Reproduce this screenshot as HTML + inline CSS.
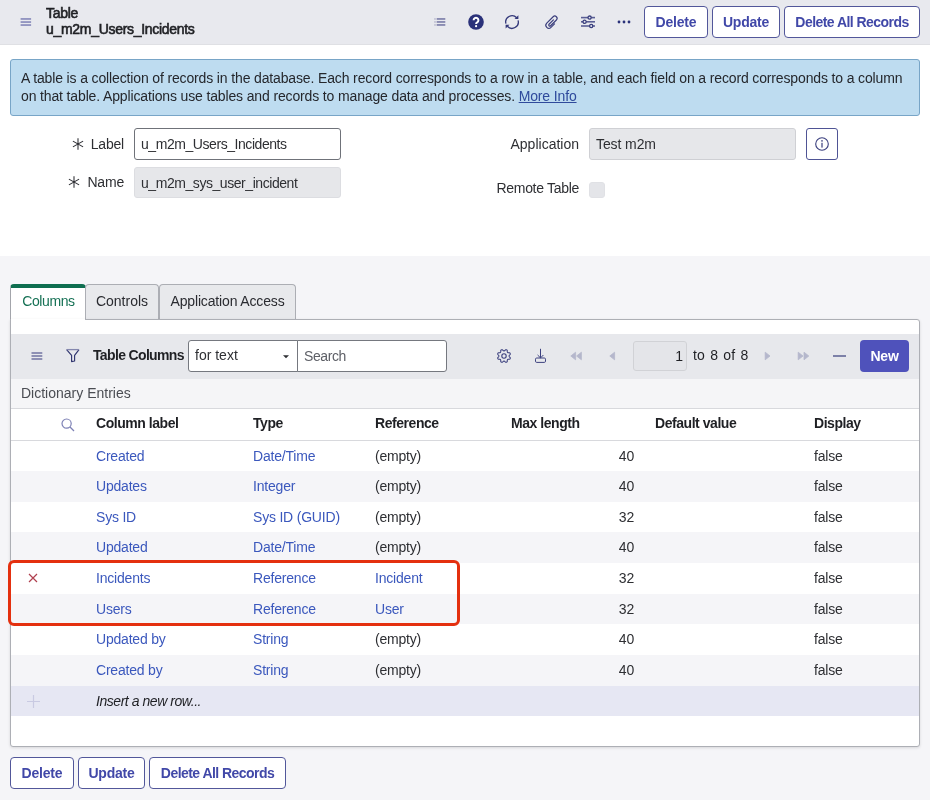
<!DOCTYPE html>
<html><head><meta charset="utf-8">
<style>
*{box-sizing:border-box;margin:0;padding:0}
html,body{width:930px;height:800px;overflow:hidden}body>*{will-change:transform}
body{font-family:"Liberation Sans",sans-serif;font-size:14px;color:#2e2f33;background:#f5f5f8;position:relative}
.a{position:absolute;white-space:nowrap}
#hdr{left:0;top:0;width:930px;height:45px;background:#e8e9ee;border-bottom:1px solid #dfe0e4}
.btn{position:absolute;height:32px;border:1px solid #52579a;border-radius:4px;background:#fff;color:#4148a8;font-weight:bold;font-size:14px;text-align:center;line-height:30px;letter-spacing:-0.2px}
#white{left:0;top:45px;width:930px;height:211px;background:#fff}
#info{left:10px;top:59px;width:910px;height:57px;background:#bedcf0;border:1px solid #78a5c7;border-radius:3px;padding:9px 0 0 10px;line-height:18px;font-size:14px;letter-spacing:-0.14px;color:#25272c;white-space:normal}
#info a{color:#2f4a9c;text-decoration:underline}
.lbl{position:absolute;font-size:14px;color:#2e2f33;text-align:right}
.inp{position:absolute;height:32px;border-radius:3px;font-size:14px;line-height:30px;padding-left:6px;letter-spacing:-0.44px}
.tab{position:absolute;top:284px;height:36px;font-size:14px;line-height:32px;text-align:center;border:1px solid #acaeb4;border-bottom:none;border-radius:4px 4px 0 0;background:#e8e9ec;color:#2a2b30}
#panel{left:10px;top:319px;width:910px;height:428px;background:#fff;border:1px solid #adafb5;border-radius:0 3px 3px 3px;box-shadow:0 1px 3px rgba(0,0,0,0.12)}
#tb{left:11px;top:334px;width:908px;height:45px;background:#e7e8ec}
#dict{left:11px;top:379px;width:908px;height:30px;background:#f5f5f7;border-bottom:1px solid #d8d9dd}
.row{position:absolute;left:11px;width:908px;height:31px}
.g{background:#f5f5f8}
.c{position:absolute;font-size:14px;line-height:31px;letter-spacing:-0.2px}
.lk{color:#3b58bd}
.th{font-weight:bold;color:#1f2024;letter-spacing:-0.45px}
</style></head><body>
<!-- header -->
<div id="hdr" class="a"></div>
<svg class="a" style="left:20px;top:17px" width="12" height="10" viewBox="0 0 12 10"><g fill="#8a8dbc"><rect x="0.6" y="1.1" width="10.5" height="1.7"/><rect x="0.6" y="4.2" width="10.5" height="1.7"/><rect x="0.6" y="7.2" width="10.5" height="1.7"/></g></svg>
<div class="a" style="left:46px;top:5px;font-size:14px;line-height:16px;color:#1f2024;letter-spacing:-0.3px;-webkit-text-stroke:0.6px #1f2024">Table<br>u_m2m_Users_Incidents</div>

<!-- header icons -->
<svg class="a" style="left:434px;top:17px" width="12" height="10" viewBox="0 0 12 10"><g fill="#8a8cb2"><rect x="3" y="1" width="8.3" height="1.9"/><rect x="3" y="4" width="8.3" height="1.9"/><rect x="3" y="7" width="8.3" height="1.9"/></g><g fill="#c9cad9"><rect x="0" y="1" width="3" height="1.9"/><rect x="0" y="4" width="3" height="1.9"/><rect x="0" y="7" width="3" height="1.9"/></g></svg>
<svg class="a" style="left:468px;top:14px" width="16" height="16" viewBox="0 0 16 16"><circle cx="8" cy="8" r="7.8" fill="#2b327a"/><path d="M5.6 6.2a2.4 2.4 0 1 1 3.6 2.1c-.8.45-1.1.8-1.1 1.6" fill="none" stroke="#fff" stroke-width="2"/><circle cx="8.1" cy="12.2" r="1.1" fill="#fff"/></svg>
<svg class="a" style="left:504px;top:14px" width="16" height="16" viewBox="0 0 16 16"><g fill="none" stroke="#33387a" stroke-width="1.3"><path d="M1.92 9.63A6.3 6.3 0 0 1 12.68 3.78"/><path d="M14.09 6.37A6.3 6.3 0 0 1 3.32 12.22"/></g><path d="M14.4 1.2v3.9h-3.9z" fill="#33387a"/><path d="M1.6 14.6v-3.9h3.9z" fill="#33387a"/></svg>
<svg class="a" style="left:542px;top:12px" width="20" height="20" viewBox="0 0 20 20"><g transform="translate(10 10.1) rotate(-45)"><path d="M0.6 3L-4.4 3A3 3 0 0 1 -4.4 -3L4.6 -3A2.3 2.3 0 0 1 4.6 1.6L-3.6 1.6A1.1 1.1 0 0 1 -3.6 -0.6L2.6 -0.6" fill="none" stroke="#3a3e7c" stroke-width="1.15" stroke-linecap="round"/></g></svg>
<svg class="a" style="left:581px;top:15px" width="15" height="14" viewBox="0 0 15 14"><g stroke="#5a5f95" stroke-width="1.6"><line x1="0" y1="2.6" x2="14" y2="2.6"/><line x1="0" y1="6.8" x2="14" y2="6.8"/><line x1="0" y1="11" x2="14" y2="11"/></g><g fill="#e8e9ee" stroke="#3a3f7e" stroke-width="1.3"><circle cx="8.6" cy="2.6" r="1.6"/><circle cx="3.6" cy="6.8" r="1.6"/><circle cx="10.2" cy="11" r="1.6"/></g></svg>
<svg class="a" style="left:617px;top:20px" width="14" height="4" viewBox="0 0 14 4"><g fill="#2b327a"><circle cx="2" cy="2" r="1.4"/><circle cx="7" cy="2" r="1.4"/><circle cx="12" cy="2" r="1.4"/></g></svg>

<div class="btn" style="left:644px;top:6px;width:64px">Delete</div>
<div class="btn" style="left:712px;top:6px;width:68px">Update</div>
<div class="btn" style="left:784px;top:6px;width:136px;letter-spacing:-0.55px">Delete All Records</div>

<!-- white form -->
<div id="white" class="a"></div>
<div id="info" class="a">A table is a collection of records in the database. Each record corresponds to a row in a table, and each field on a record corresponds to a column on that table. Applications use tables and records to manage data and processes. <a>More Info</a></div>

<svg class="a" style="left:71px;top:137px" width="14" height="14" viewBox="0 0 14 14"><g stroke="#2a2b30" stroke-width="1.05"><path d="M7 1.2v11.6M1.9 4.1l10.2 5.8M1.9 9.9l10.2-5.8"/></g></svg><div class="lbl" style="left:60px;top:136px;width:64px;letter-spacing:-0.2px">Label</div>
<div class="inp" style="left:134px;top:128px;width:207px;border:1px solid #6f7279;background:#fff">u_m2m_Users_Incidents</div>
<svg class="a" style="left:67px;top:175px" width="14" height="14" viewBox="0 0 14 14"><g stroke="#2a2b30" stroke-width="1.05"><path d="M7 1.2v11.6M1.9 4.1l10.2 5.8M1.9 9.9l10.2-5.8"/></g></svg><div class="lbl" style="left:60px;top:174px;width:64px;letter-spacing:-0.2px">Name</div>
<div class="inp" style="left:134px;top:167px;width:207px;height:31px;border:1px solid #dcdde1;background:#e6e7ea">u_m2m_sys_user_incident</div>

<div class="lbl" style="left:480px;top:136px;width:99px">Application</div>
<div class="inp" style="left:589px;top:128px;width:207px;border:1px solid #cfd0d4;background:#e6e7ea;letter-spacing:-0.1px">Test m2m</div>
<div class="a" style="left:806px;top:128px;width:32px;height:32px;border:1px solid #4f5495;border-radius:3px;background:#fff"></div>
<svg class="a" style="left:815px;top:137px" width="14" height="14" viewBox="0 0 14 14"><circle cx="7" cy="7" r="6.3" fill="none" stroke="#3a3f7e" stroke-width="1.1"/><rect x="6.4" y="5.8" width="1.2" height="4.8" fill="#3a3f7e"/><circle cx="7" cy="3.9" r=".8" fill="#3a3f7e"/></svg>
<div class="lbl" style="left:480px;top:180px;width:99px;letter-spacing:-0.3px">Remote Table</div>
<div class="a" style="left:589px;top:182px;width:16px;height:16px;background:#e4e5e9;border:1px solid #e0e1e5;border-radius:3px"></div>

<!-- tabs -->
<div class="tab" style="left:10px;width:76px;background:#fff;color:#167155;border-top:4px solid #0f6e50;border-left:1px solid #a3a5ab;border-right:none;line-height:26px;height:36px;letter-spacing:-0.4px">Columns</div>
<div class="tab" style="left:85px;width:74px">Controls</div>
<div class="tab" style="left:159px;width:137px;letter-spacing:-0.15px">Application Access</div>

<div id="panel" class="a"></div>
<div class="a" style="left:11px;top:319px;width:74px;height:2px;background:#fff"></div>
<div id="tb" class="a"></div>
<svg class="a" style="left:31px;top:351px" width="12" height="10" viewBox="0 0 12 10"><g fill="#8487ae"><rect x="0.5" y="1.1" width="10.8" height="1.8"/><rect x="0.5" y="4.1" width="10.8" height="1.8"/><rect x="0.5" y="7.1" width="10.8" height="1.8"/></g></svg>
<svg class="a" style="left:65px;top:348px" width="15" height="15" viewBox="0 0 15 15"><path d="M14 1.6L9.6 7.4v5.6L6.6 13.6V7.4L1.6 1.6" fill="none" stroke="#30356f" stroke-width="1.15" stroke-linejoin="round"/><path d="M1.6 1.6h12.4" stroke="#8487ae" stroke-width="1.3"/></svg>
<div class="a th" style="left:93px;top:347px;font-size:14px;color:#1f2024;letter-spacing:-0.65px">Table Columns</div>
<div class="a" style="left:188px;top:340px;width:110px;height:32px;background:#fff;border:1px solid #75787f;border-radius:3px 0 0 3px;line-height:28px;padding-left:6px">for text</div>
<svg class="a" style="left:283px;top:355px" width="6" height="4" viewBox="0 0 6 4"><path d="M0 0.3h6L3 3.3z" fill="#2e2f33"/></svg>
<div class="a" style="left:297px;top:340px;width:150px;height:32px;background:#fff;border:1px solid #75787f;border-radius:0 3px 3px 0;line-height:30px;padding-left:6px;color:#5d5f66;letter-spacing:-0.4px">Search</div>

<svg class="a" style="left:496px;top:348px" width="16" height="16" viewBox="0 0 16 16"><path d="M14.19 10.56 L14.11 10.72 L14.02 10.87 L13.90 11.01 L13.76 11.13 L13.57 11.22 L13.33 11.27 L13.05 11.28 L12.76 11.27 L12.49 11.26 L12.26 11.27 L12.08 11.30 L11.93 11.36 L11.81 11.43 L11.70 11.52 L11.61 11.61 L11.52 11.70 L11.43 11.81 L11.36 11.93 L11.30 12.08 L11.27 12.26 L11.26 12.49 L11.27 12.76 L11.28 13.05 L11.27 13.33 L11.22 13.57 L11.13 13.76 L11.01 13.90 L10.87 14.02 L10.72 14.11 L10.56 14.19 L10.40 14.25 L10.23 14.29 L10.05 14.30 L9.86 14.28 L9.66 14.21 L9.46 14.08 L9.25 13.89 L9.05 13.68 L8.87 13.48 L8.70 13.32 L8.55 13.22 L8.41 13.16 L8.27 13.12 L8.13 13.11 L8.00 13.10 L7.87 13.11 L7.73 13.12 L7.59 13.16 L7.45 13.22 L7.30 13.32 L7.13 13.48 L6.95 13.68 L6.75 13.89 L6.54 14.08 L6.34 14.21 L6.14 14.28 L5.95 14.30 L5.77 14.29 L5.60 14.25 L5.44 14.19 L5.28 14.11 L5.13 14.02 L4.99 13.90 L4.87 13.76 L4.78 13.57 L4.73 13.33 L4.72 13.05 L4.73 12.76 L4.74 12.49 L4.73 12.26 L4.70 12.08 L4.64 11.93 L4.57 11.81 L4.48 11.70 L4.39 11.61 L4.30 11.52 L4.19 11.43 L4.07 11.36 L3.92 11.30 L3.74 11.27 L3.51 11.26 L3.24 11.27 L2.95 11.28 L2.67 11.27 L2.43 11.22 L2.24 11.13 L2.10 11.01 L1.98 10.87 L1.89 10.72 L1.81 10.56 L1.75 10.40 L1.71 10.23 L1.70 10.05 L1.72 9.86 L1.79 9.66 L1.92 9.46 L2.11 9.25 L2.32 9.05 L2.52 8.87 L2.68 8.70 L2.78 8.55 L2.84 8.41 L2.88 8.27 L2.89 8.13 L2.90 8.00 L2.89 7.87 L2.88 7.73 L2.84 7.59 L2.78 7.45 L2.68 7.30 L2.52 7.13 L2.32 6.95 L2.11 6.75 L1.92 6.54 L1.79 6.34 L1.72 6.14 L1.70 5.95 L1.71 5.77 L1.75 5.60 L1.81 5.44 L1.89 5.28 L1.98 5.13 L2.10 4.99 L2.24 4.87 L2.43 4.78 L2.67 4.73 L2.95 4.72 L3.24 4.73 L3.51 4.74 L3.74 4.73 L3.92 4.70 L4.07 4.64 L4.19 4.57 L4.30 4.48 L4.39 4.39 L4.48 4.30 L4.57 4.19 L4.64 4.07 L4.70 3.92 L4.73 3.74 L4.74 3.51 L4.73 3.24 L4.72 2.95 L4.73 2.67 L4.78 2.43 L4.87 2.24 L4.99 2.10 L5.13 1.98 L5.28 1.89 L5.44 1.81 L5.60 1.75 L5.77 1.71 L5.95 1.70 L6.14 1.72 L6.34 1.79 L6.54 1.92 L6.75 2.11 L6.95 2.32 L7.13 2.52 L7.30 2.68 L7.45 2.78 L7.59 2.84 L7.73 2.88 L7.87 2.89 L8.00 2.90 L8.13 2.89 L8.27 2.88 L8.41 2.84 L8.55 2.78 L8.70 2.68 L8.87 2.52 L9.05 2.32 L9.25 2.11 L9.46 1.92 L9.66 1.79 L9.86 1.72 L10.05 1.70 L10.23 1.71 L10.40 1.75 L10.56 1.81 L10.72 1.89 L10.87 1.98 L11.01 2.10 L11.13 2.24 L11.22 2.43 L11.27 2.67 L11.28 2.95 L11.27 3.24 L11.26 3.51 L11.27 3.74 L11.30 3.92 L11.36 4.07 L11.43 4.19 L11.52 4.30 L11.61 4.39 L11.70 4.48 L11.81 4.57 L11.93 4.64 L12.08 4.70 L12.26 4.73 L12.49 4.74 L12.76 4.73 L13.05 4.72 L13.33 4.73 L13.57 4.78 L13.76 4.87 L13.90 4.99 L14.02 5.13 L14.11 5.28 L14.19 5.44 L14.25 5.60 L14.29 5.77 L14.30 5.95 L14.28 6.14 L14.21 6.34 L14.08 6.54 L13.89 6.75 L13.68 6.95 L13.48 7.13 L13.32 7.30 L13.22 7.45 L13.16 7.59 L13.12 7.73 L13.11 7.87 L13.10 8.00 L13.11 8.13 L13.12 8.27 L13.16 8.41 L13.22 8.55 L13.32 8.70 L13.48 8.87 L13.68 9.05 L13.89 9.25 L14.08 9.46 L14.21 9.66 L14.28 9.86 L14.30 10.05 L14.29 10.23 L14.25 10.40Z" fill="none" stroke="#3d417f" stroke-width="1.05" stroke-linejoin="round"/><circle cx="8" cy="8" r="2.2" fill="none" stroke="#3d417f" stroke-width="1.1"/></svg>
<svg class="a" style="left:533px;top:347px" width="14" height="17" viewBox="0 0 14 17"><g fill="none" stroke="#3d417f" stroke-width="1"><path d="M7.5 1.8v9M4.6 8l2.9 2.9L10.4 8"/><rect x="2.5" y="11" width="10" height="4.4" rx="1.2"/></g></svg>
<svg class="a" style="left:570px;top:351px" width="13" height="10" viewBox="0 0 13 10"><g fill="#b5b7cc" stroke="#b5b7cc" stroke-width="0.8" stroke-linejoin="round"><path d="M5.6 1.2v7.6L0.8 5z"/><path d="M11.4 1.2v7.6L6.6 5z"/></g></svg>
<svg class="a" style="left:609px;top:351px" width="7" height="10" viewBox="0 0 7 10"><path d="M5.6 1.2v7.6L0.8 5z" fill="#b5b7cc" stroke="#b5b7cc" stroke-width="0.8" stroke-linejoin="round"/></svg>
<div class="a" style="left:633px;top:341px;width:54px;height:30px;background:#e4e5e9;border:1px solid #d1d2d6;border-radius:3px;text-align:right;padding-right:3px;line-height:28px;color:#1f2024">1</div>
<div class="a" style="left:693px;top:341px;line-height:28px;color:#1f2024;letter-spacing:0.1px;word-spacing:1.3px">to 8 of 8</div>
<svg class="a" style="left:764px;top:351px" width="7" height="10" viewBox="0 0 7 10"><path d="M1.2 1.2v7.6L6 5z" fill="#b5b7cc" stroke="#b5b7cc" stroke-width="0.8" stroke-linejoin="round"/></svg>
<svg class="a" style="left:797px;top:351px" width="13" height="10" viewBox="0 0 13 10"><g fill="#b5b7cc" stroke="#b5b7cc" stroke-width="0.8" stroke-linejoin="round"><path d="M1.2 1.2v7.6L6 5z"/><path d="M7 1.2v7.6L11.8 5z"/></g></svg>
<div class="a" style="left:833px;top:355px;width:13px;height:2px;background:#7d81a8"></div>
<div class="a" style="left:860px;top:340px;width:49px;height:32px;background:#4f52bb;border-radius:4px;color:#fff;font-weight:bold;text-align:center;line-height:32px;letter-spacing:-0.2px">New</div>

<div id="dict" class="a"></div>
<div class="a" style="left:21px;top:385px;color:#4b4d53;letter-spacing:0px">Dictionary Entries</div>

<!-- header row -->
<div class="row" style="top:409px;height:32px;background:#fff;border-bottom:1px solid #d8d9dd"></div>
<svg class="a" style="left:61px;top:418px" width="14" height="14" viewBox="0 0 14 14"><circle cx="5.6" cy="5.6" r="4.6" fill="none" stroke="#7d81b5" stroke-width="1.2"/><path d="M9 9l4 4" stroke="#7d81b5" stroke-width="1.3"/></svg>
<div class="a th" style="left:96px;top:415px">Column label</div>
<div class="a th" style="left:253px;top:415px">Type</div>
<div class="a th" style="left:375px;top:415px">Reference</div>
<div class="a th" style="left:511px;top:415px">Max length</div>
<div class="a th" style="left:655px;top:415px">Default value</div>
<div class="a th" style="left:814px;top:415px">Display</div>

<div id="rows"><div class="row" style="top:441px;height:30px">
<span class="c lk" style="left:85px">Created</span><span class="c lk" style="left:242px">Date/Time</span><span class="c " style="left:364px">(empty)</span><span class="c" style="right:285px">40</span><span class="c" style="left:803px">false</span></div>
<div class="row g" style="top:471px;height:31px">
<span class="c lk" style="left:85px">Updates</span><span class="c lk" style="left:242px">Integer</span><span class="c " style="left:364px">(empty)</span><span class="c" style="right:285px">40</span><span class="c" style="left:803px">false</span></div>
<div class="row" style="top:502px;height:30px">
<span class="c lk" style="left:85px">Sys ID</span><span class="c lk" style="left:242px">Sys ID (GUID)</span><span class="c " style="left:364px">(empty)</span><span class="c" style="right:285px">32</span><span class="c" style="left:803px">false</span></div>
<div class="row g" style="top:532px;height:31px">
<span class="c lk" style="left:85px">Updated</span><span class="c lk" style="left:242px">Date/Time</span><span class="c " style="left:364px">(empty)</span><span class="c" style="right:285px">40</span><span class="c" style="left:803px">false</span></div>
<div class="row" style="top:563px;height:31px">
<span class="c lk" style="left:85px">Incidents</span><span class="c lk" style="left:242px">Reference</span><span class="c lk" style="left:364px">Incident</span><span class="c" style="right:285px">32</span><span class="c" style="left:803px">false</span></div>
<div class="row g" style="top:594px;height:30px">
<span class="c lk" style="left:85px">Users</span><span class="c lk" style="left:242px">Reference</span><span class="c lk" style="left:364px">User</span><span class="c" style="right:285px">32</span><span class="c" style="left:803px">false</span></div>
<div class="row" style="top:624px;height:31px">
<span class="c lk" style="left:85px">Updated by</span><span class="c lk" style="left:242px">String</span><span class="c " style="left:364px">(empty)</span><span class="c" style="right:285px">40</span><span class="c" style="left:803px">false</span></div>
<div class="row g" style="top:655px;height:31px">
<span class="c lk" style="left:85px">Created by</span><span class="c lk" style="left:242px">String</span><span class="c " style="left:364px">(empty)</span><span class="c" style="right:285px">40</span><span class="c" style="left:803px">false</span></div>
<div class="row" style="top:686px;height:30px;background:#e6e7f3"><svg class="a" style="left:16px;top:9px" width="13" height="13" viewBox="0 0 13 13"><path d="M6.5 0v13M0 6.5h13" stroke="#c9cae2" stroke-width="1.2"/></svg><span class="c" style="left:85px;font-style:italic;line-height:30px;color:#1f2024;letter-spacing:-0.45px">Insert a new row...</span></div>
<svg class="a" style="left:28px;top:573px" width="10" height="10" viewBox="0 0 10 10"><path d="M1 1l8 8M9 1l-8 8" stroke="#b0404f" stroke-width="1.2"/></svg>
<div class="a" style="left:8px;top:560px;width:452px;height:66px;border:3px solid #e4300f;border-radius:6px"></div>
<div class="btn" style="left:10px;top:757px;width:64px">Delete</div>
<div class="btn" style="left:78px;top:757px;width:67px">Update</div>
<div class="btn" style="left:149px;top:757px;width:137px;letter-spacing:-0.55px">Delete All Records</div></div><!--endrows-->
</body></html>
